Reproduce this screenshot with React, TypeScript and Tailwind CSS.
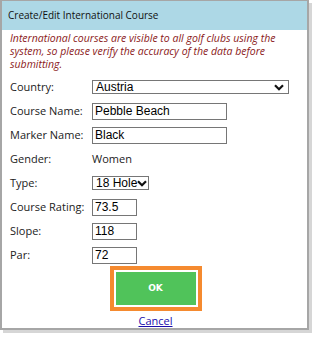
import React from "react";

const label = "font-['Open_Sans',sans-serif] text-[11px] text-[#222]";
const val = "font-['Liberation_Sans',Arial,sans-serif] text-[12px] text-black";

function Chevron() {
  return (
    <svg width="10" height="7" viewBox="0 0 10 7" className="shrink-0">
      <path d="M1 1.2 L5 5.2 L9 1.2" fill="none" stroke="#111" strokeWidth="2.2" />
    </svg>
  );
}

function Row({ name, children }: { name: string; children: React.ReactNode }) {
  return (
    <div className="flex h-[24px] items-center">
      <div className={`w-[82px] ${label}`}>{name}</div>
      {children}
    </div>
  );
}

function Input({ w, v }: { w: string; v: string }) {
  return (
    <div className={`${w} h-[17px] border border-[#767676] bg-white flex items-center pl-[2px] ${val}`}>{v}</div>
  );
}

export default function App() {
  return (
    <div className="w-[323px] h-[346px] bg-white">
      <div className="w-[309px] shadow-[3px_3px_0_#d6d6d6] border-x-2 border-b-2 border-t border-[#a6a6a6] bg-white">
        <div className="h-[29px] bg-[#add8e6] flex items-center pl-[6px] font-['Open_Sans',sans-serif] text-[10px] text-[#111]">
          Create/Edit International Course
        </div>
        <div className="px-[8px]">
          <p className="mt-[2px] font-['Open_Sans',sans-serif] italic text-[10.5px] leading-[13px] text-[#8b1a1a] pr-[20px]">
            International courses are visible to all golf clubs using the system, so please verify the accuracy of the data before submitting.
          </p>
          <div className="mt-[4px]">
            <Row name="Country:">
              <div className={`w-[197px] h-[14px] border border-[#767676] bg-white flex items-center justify-between pl-[3px] pr-[4px] ${val}`}>
                <span>Austria</span>
                <Chevron />
              </div>
            </Row>
            <Row name="Course Name:"><Input w="w-[135px]" v="Pebble Beach" /></Row>
            <Row name="Marker Name:"><Input w="w-[135px]" v="Black" /></Row>
            <Row name="Gender:"><span className={label}>Women</span></Row>
            <Row name="Type:">
              <div className={`w-[57px] h-[14px] border border-[#767676] bg-white flex items-center justify-between pl-[3px] pr-[2px] whitespace-nowrap ${val}`}>
                <span>18 Hole</span>
                <Chevron />
              </div>
            </Row>
            <Row name="Course Rating:"><Input w="w-[45px]" v="73.5" /></Row>
            <Row name="Slope:"><Input w="w-[45px]" v="118" /></Row>
            <Row name="Par:"><Input w="w-[45px]" v="72" /></Row>
          </div>
          <div className="flex justify-center mt-[-1px]">
            <div className="ml-[2px] border-[4px] border-[#f58a2f] p-[2px] bg-white">
              <button className="w-[80px] h-[33px] bg-[#50c35a] text-white font-['DejaVu_Sans',Verdana,sans-serif] font-bold text-[9px]">
                OK
              </button>
            </div>
          </div>
          <div className="flex justify-center pt-[2px] pb-0 leading-[15px]">
            <a href="#" className="ml-[2px] font-['Open_Sans',sans-serif] text-[11px] text-[#1a0dab] underline">Cancel</a>
          </div>
        </div>
      </div>
    </div>
  );
}
